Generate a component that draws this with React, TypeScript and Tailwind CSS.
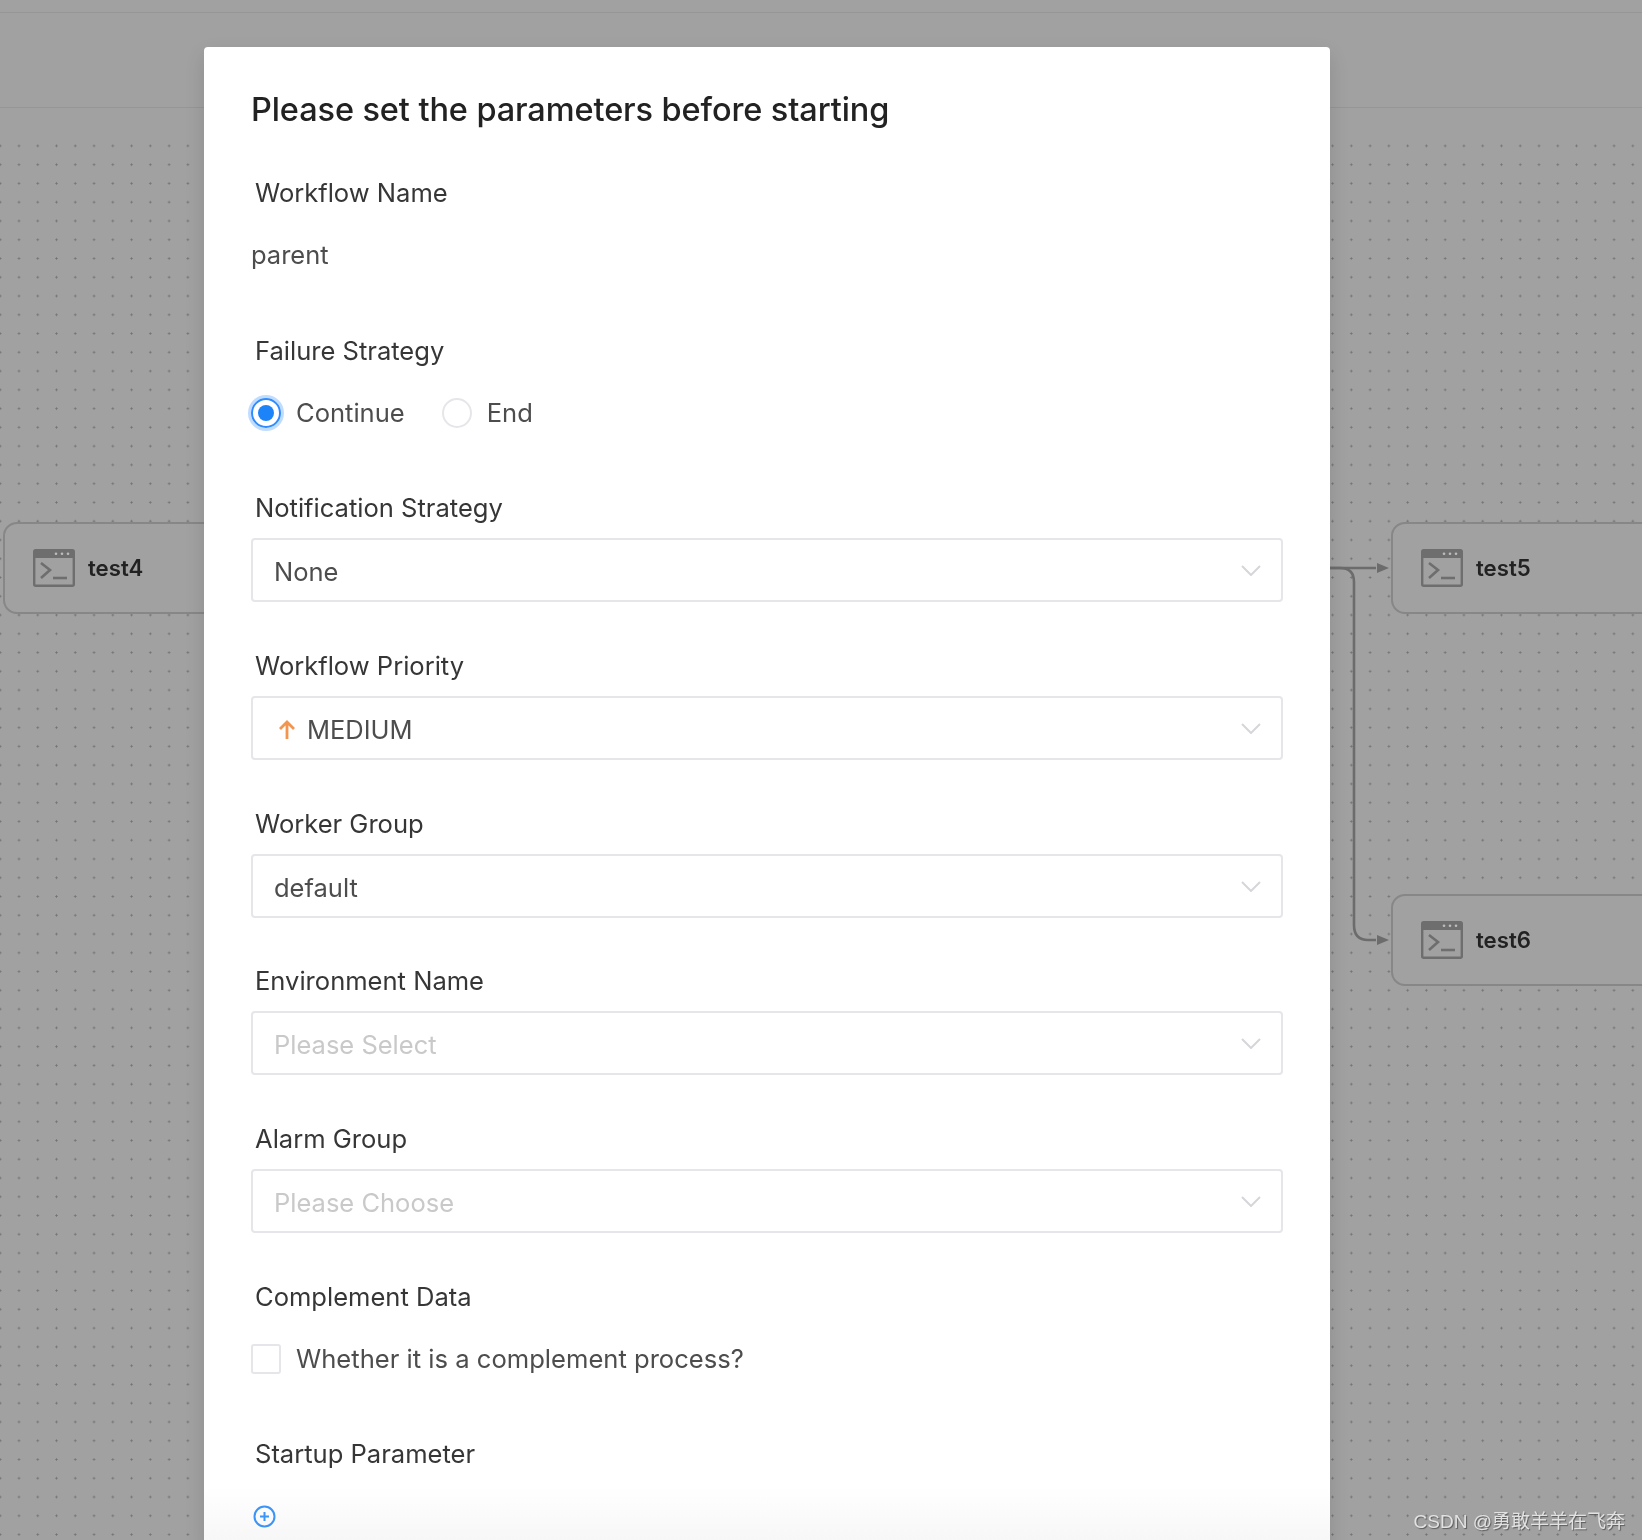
import React from 'react'

const font = "font-['Inter','Noto_Sans',sans-serif]"

const TerminalIcon = () => (
  <svg width="42" height="38" viewBox="0 0 42 38" className="shrink-0">
    <rect x="1.2" y="1.2" width="39.6" height="35.6" rx="1.5" fill="none" stroke="#6e6e6e" strokeWidth="2.4" />
    <rect x="1" y="1" width="40" height="8" fill="#6e6e6e" />
    <circle cx="23" cy="4.8" r="1.3" fill="#bdbdbd" />
    <circle cx="29" cy="4.8" r="1.3" fill="#bdbdbd" />
    <circle cx="35" cy="4.8" r="1.3" fill="#bdbdbd" />
    <path d="M8 14 L17 21 L8 29" fill="none" stroke="#6e6e6e" strokeWidth="2.6" />
    <path d="M20 29 H34" fill="none" stroke="#6e6e6e" strokeWidth="2.6" />
  </svg>
)

const Node = ({ name, pos }: { name: string; pos: string }) => (
  <div className={`absolute h-[92px] w-[320px] rounded-[14px] border-[2.5px] border-[#878787] bg-[#a1a1a1] flex items-center pl-[27.5px] gap-[13.5px] ${pos}`}>
    <TerminalIcon />
    <span className="text-[22.2px] font-semibold text-[#222222]">{name}</span>
  </div>
)

const Chevron = () => (
  <svg width="20" height="11" viewBox="0 0 20 11" className="shrink-0 mt-[1px]">
    <path d="M1 1 L10 10 L19 1" fill="none" stroke="#d6d6da" strokeWidth="2" />
  </svg>
)

const Select = ({ value, placeholder, icon }: { value: string; placeholder?: boolean; icon?: React.ReactNode }) => (
  <div className="h-[64px] -mt-[1px] -mb-[1px] rounded-[4px] border-2 border-[#e6e6ea] flex items-center pl-[21px] pr-[20px]">
    {icon}
    <span className={`flex-1 pt-[4px] text-[25.5px] ${placeholder ? 'text-[#c9c9c9]' : 'text-[#4d4d4d]'}`}>{value}</span>
    <Chevron />
  </div>
)

const Item = ({ label, children }: { label: string; children: React.ReactNode }) => (
  <div className="pb-[41.7px]">
    <div className="h-[44px] mb-[10px] pl-[4px] pt-[2px] flex items-center text-[25.55px] text-[#363636]">{label}</div>
    {children}
  </div>
)

const ArrowUp = () => (
  <svg width="18" height="20" viewBox="0 0 18 20" className="ml-[4px] mr-[11px] mt-[3px] shrink-0">
    <path d="M9 19 V2 M2 9 L9 2 L16 9" fill="none" stroke="#f2954e" strokeWidth="2.8" />
  </svg>
)

const App = () => {
  return (
    <div className={`relative h-[1540px] w-[1642px] overflow-hidden bg-[#a1a1a1] blur-[0.6px] ${font}`}>
      <div className="h-[13px] border-b border-[#969696]" />
      <div className="h-[95px] border-b border-[#969696]" />
      <div className="relative h-[1432px] pt-[30px]">
        <div className="h-full bg-[radial-gradient(circle,#727272_0.9px,transparent_1.2px)] bg-[size:18.77px_18.77px] bg-[position:9.6px_-1.5px]" />
      </div>

      <Node name="test4" pos="left-[3px] top-[522px]" />
      <Node name="test5" pos="left-[1391px] top-[522px]" />
      <Node name="test6" pos="left-[1391px] top-[894px]" />

      <svg className="absolute left-[1330px] top-[555px]" width="64" height="395" viewBox="0 0 64 395">
        <path d="M0 13 H46" fill="none" stroke="#6c6c6c" strokeWidth="2.6" />
        <path d="M0 13 H10 Q24 13 24 27 V370 Q24 385 38 385 H46" fill="none" stroke="#6c6c6c" strokeWidth="2.6" />
        <path d="M47 8 L59 13 L47 18 Z" fill="#6c6c6c" />
        <path d="M47 380 L59 385 L47 390 Z" fill="#6c6c6c" />
      </svg>

      <div className="absolute left-[204px] top-[47px] w-[1126px] h-[1500px] rounded-[4px] bg-[linear-gradient(to_bottom,#fff_96%,#f6f6f6_100%)] px-[47px] pt-[30px] shadow-[0_8px_20px_rgba(0,0,0,0.12)]">
        <h2 className="h-[66px] mb-[27px] flex items-center text-[32.5px] [font-weight:550] tracking-[-0.1px] text-[#222222]">Please set the parameters before starting</h2>

        <Item label="Workflow Name">
          <div className="h-[62px] flex items-center text-[25.5px] text-[#4d4d4d]">parent</div>
        </Item>

        <Item label="Failure Strategy">
          <div className="h-[62px] flex items-center text-[25.55px] text-[#4d4d4d]">
            <span className="h-[30px] w-[30px] rounded-full border-2 border-[#2f8cff] flex items-center justify-center shadow-[0_0_0_3px_rgba(47,140,255,0.3)]">
              <span className="h-[16px] w-[16px] rounded-full bg-[#1c84f8]" />
            </span>
            <span className="ml-[15px]">Continue</span>
            <span className="ml-[37px] h-[30px] w-[30px] rounded-full border-2 border-[#e6e6ea]" />
            <span className="ml-[15px]">End</span>
          </div>
        </Item>

        <Item label="Notification Strategy">
          <Select value="None" />
        </Item>

        <Item label="Workflow Priority">
          <Select value="MEDIUM" icon={<ArrowUp />} />
        </Item>

        <Item label="Worker Group">
          <Select value="default" />
        </Item>

        <Item label="Environment Name">
          <Select value="Please Select" placeholder />
        </Item>

        <Item label="Alarm Group">
          <Select value="Please Choose" placeholder />
        </Item>

        <Item label="Complement Data">
          <div className="h-[62px] flex items-center text-[25.6px] text-[#4d4d4d]">
            <span className="h-[30px] w-[30px] rounded-[3px] border-2 border-[#e6e6ea]" />
            <span className="ml-[15px]">Whether it is a complement process?</span>
          </div>
        </Item>

        <Item label="Startup Parameter">
          <div className="h-[62px] flex items-center pl-[2px]">
            <svg width="23" height="23" viewBox="0 0 23 23">
              <circle cx="11.5" cy="11.5" r="10" fill="none" stroke="#3b94f7" strokeWidth="2" />
              <path d="M11.5 7 V16 M7 11.5 H16" stroke="#3b94f7" strokeWidth="2" />
            </svg>
          </div>
        </Item>
      </div>

      <div className="absolute right-[17px] top-[1508px] text-[19px] text-[#e2e2e2] [text-shadow:1px_1px_1px_rgba(60,60,60,0.7)] font-['Liberation_Sans','Noto_Sans_CJK_SC',sans-serif]">CSDN @勇敢羊羊在飞奔</div>
    </div>
  )
}

export default App
